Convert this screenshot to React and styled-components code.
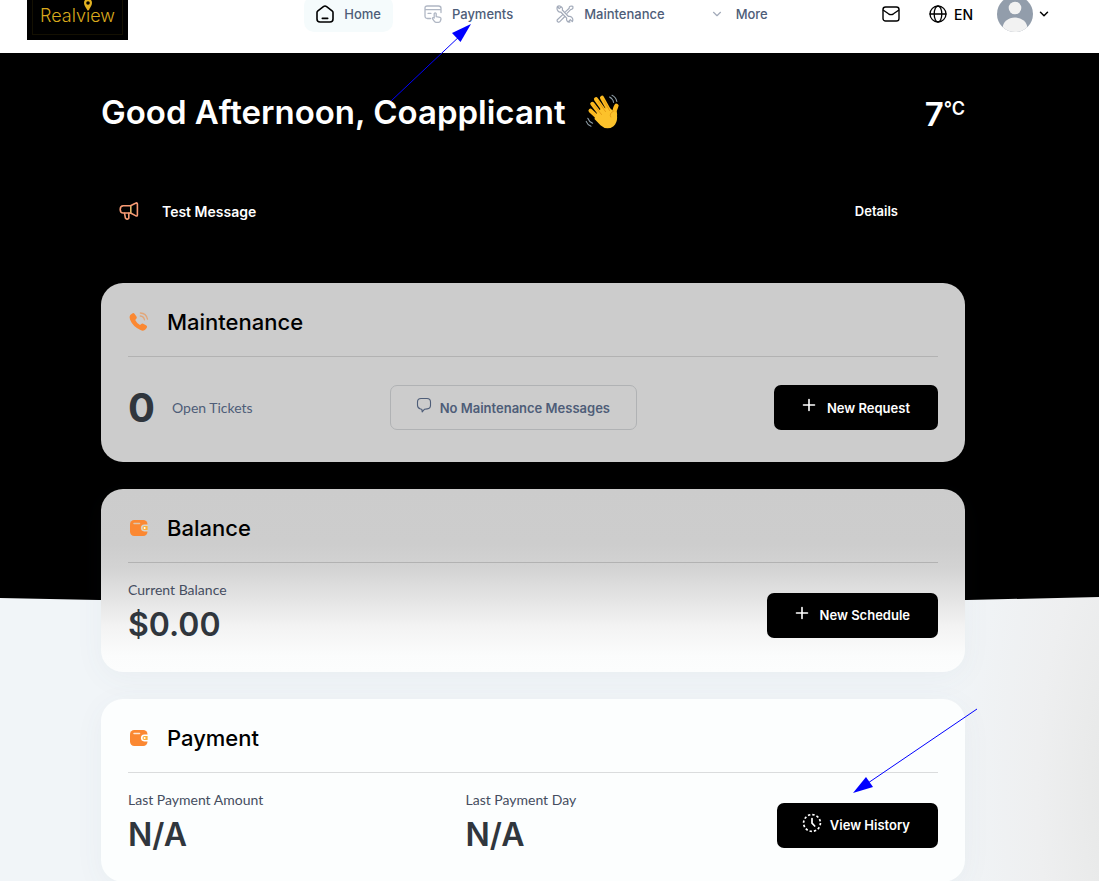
import React from "react";
import styled, { createGlobalStyle } from "styled-components";

const GlobalStyle = createGlobalStyle`
  * { box-sizing: border-box; }
  body {
    margin: 0;
    font-family: Inter, "Liberation Sans", sans-serif;
    color: #000;
    background: #f1f5f8;
  }
  svg { display: block; flex: none; }
  a { color: inherit; text-decoration: none; }
  button { font: inherit; cursor: pointer; }
  h1, h2, p, dl, dt, dd { margin: 0; }
`;

const Page = styled.div`
  position: relative;
  overflow: hidden;
`;

const Header = styled.header`
  display: flex;
  align-items: center;
  justify-content: space-between;
  height: 53px;
  padding: 0 50px 25px 27px;
  background: #fff;
`;

const Logo = styled.a`
  display: flex;
  width: 101px;
  height: 52px;
  padding: 5px;
  background: #000;
`;

const LogoFrame = styled.span`
  position: relative;
  flex: 1;
  display: flex;
  align-items: center;
  justify-content: center;
  padding-top: 3px;
  border: 1px solid #141002;
  color: #d9a91c;
  font-size: 18px;
  font-weight: 300;
`;

const LogoPin = styled.svg`
  position: absolute;
  top: 5px;
  left: 51px;
`;

const Nav = styled.nav`
  display: flex;
  gap: 19px;
  margin-left: 74px;
`;

const NavItem = styled.a`
  display: flex;
  align-items: center;
  gap: 10px;
  height: 36px;
  padding: 0 12px;
  border-radius: 10px;
  background: ${(p) => (p.$active ? "#f5fbfc" : "transparent")};
  color: #4e5d78;
  font-size: 13px;
  font-weight: 500;
`;

const Tools = styled.div`
  display: flex;
  align-items: center;
`;

const ToolButton = styled.button`
  display: flex;
  align-items: center;
  gap: ${(p) => p.$gap || 7}px;
  margin: 0 0 0 ${(p) => p.$space || 0}px;
  padding: 0;
  border: 0;
  background: none;
  color: #000;
  font-size: 14px;
  font-weight: 500;
`;

const Main = styled.main`
  position: relative;
  z-index: 0;
  padding: 37px 134px 27px 101px;
  background: radial-gradient(ellipse 190px 520px at 103% 86%, #e5e6e5, #eeeff0 50%, #f1f5f8);

  &::before {
    content: "";
    position: absolute;
    z-index: -1;
    inset: 0 0 auto;
    height: 549px;
    background: #000;
    clip-path: polygon(
      0 0,
      100% 0,
      100% calc(100% - 5px),
      88% calc(100% - 2px),
      50% 100%,
      9% calc(100% - 2px),
      0 calc(100% - 4px)
    );
  }
`;

const Greeting = styled.div`
  display: flex;
  align-items: center;
  justify-content: space-between;
  height: 44px;
  color: #fff;
`;

const Title = styled.h1`
  display: flex;
  align-items: center;
  gap: 19px;
  font-size: 33px;
  line-height: 44px;
  font-weight: 600;
`;

const Temperature = styled.p`
  display: flex;
  align-items: flex-start;
  padding-top: 4px;
  font-size: 33px;
  line-height: 44px;
  font-weight: 600;
`;

const Unit = styled.span`
  font-size: 18px;
  line-height: 34px;
`;

const Notice = styled.section`
  display: flex;
  align-items: center;
  height: 40px;
  margin: 57px 0 52px;
  padding: 0 67px 0 18px;
  color: #fff;
  font-size: 13px;
  font-weight: 600;
`;

const NoticeText = styled.p`
  flex: 1;
  padding-left: 23px;
  font-size: 14px;
`;

const Cards = styled.div`
  display: grid;
  gap: 27px;
`;

const surfaces = {
  dim: "#ccc",
  fade: "linear-gradient(#ccc 0, #cdcdcd 30%, #d3d3d3 43%, #e4e4e4 60%, #f3f3f3 75%, #fbfcfc 91%, #fcfdfd)",
  light: "#fcfefe",
};

const Card = styled.section`
  padding: 0 27px;
  border-radius: 22px;
  background: ${(p) => surfaces[p.$surface]};
  box-shadow: ${(p) => (p.$surface === "dim" ? "none" : "0 6px 30px rgba(70, 90, 120, 0.05)")};
`;

const CardHead = styled.div`
  display: flex;
  align-items: center;
  gap: 17px;
  height: 74px;
  padding-top: 5px;
  border-bottom: 1px solid ${(p) => (p.$light ? "#dadcdd" : "#b2b2b2")};
`;

const CardTitle = styled.h2`
  font-size: 22px;
  font-weight: 500;
`;

const TicketRow = styled.div`
  display: flex;
  align-items: center;
  justify-content: space-between;
  padding: 28px 0 32px;
`;

const Tickets = styled.p`
  display: flex;
  align-items: center;
  gap: 17px;
  color: #4e5d78;
  font-family: Lato, sans-serif;
  font-size: 14px;
`;

const Count = styled.strong`
  color: #30363d;
  font-family: Inter, sans-serif;
  font-size: 40px;
  line-height: 45px;
  font-weight: 700;
`;

const FigureRow = styled.div`
  display: grid;
  grid-template-columns: ${(p) => p.$columns};
  align-items: center;
  padding: 17px 0 22px;

  > button { justify-self: end; }
`;

const Figure = styled.dl`
  dt {
    color: #454d60;
    font-family: Lato, sans-serif;
    font-size: 14px;
    line-height: 20px;
  }
  dd {
    color: #30363d;
    font-size: 32px;
    line-height: 50px;
    font-weight: 600;
  }
`;

const Button = styled.button`
  display: flex;
  align-items: center;
  gap: 8px;
  height: 45px;
  padding: 0 ${(p) => (p.$outline ? 26 : 28)}px 0 25px;
  border: ${(p) => (p.$outline ? "1px solid #b0b2b4" : "0")};
  border-radius: 7px;
  background: ${(p) => (p.$outline ? "transparent" : "#000")};
  color: ${(p) => (p.$outline ? "#4e5d78" : "#fff")};
  font-size: 13px;
  font-weight: 600;
  white-space: nowrap;

  svg { margin-bottom: 5px; }
`;

const Pointer = styled.svg`
  position: absolute;
  z-index: 2;
  left: ${(p) => p.$left}px;
  top: ${(p) => p.$top}px;
  pointer-events: none;
`;

const line = { fill: "none", stroke: "currentColor", strokeLinecap: "round", strokeLinejoin: "round" };

const HomeIcon = () => (
  <svg width="18" height="18" viewBox="0 0 18 18" {...line} stroke="#000" strokeWidth="1.6">
    <path d="M1 7.6Q1 6.5 1.9 5.8L7.4 1.6Q9 .4 10.6 1.6L16.1 5.8Q17 6.5 17 7.6V14Q17 17 14 17H4Q1 17 1 14ZM6.3 13.4h5.4" />
  </svg>
);
const PaymentsIcon = () => (
  <svg width="18" height="18" viewBox="0 0 18 18" {...line} stroke="#b0b7c4" strokeWidth="1.3">
    <path d="M6.5 13.5H3.5Q1 13.5 1 11V3Q1 1 3.2 1H14.5Q17 1 17 3.2V7.5M1 4.7h16M4 8.3h3" />
    <path d="M10.2 13V8.7Q11.2 7.2 12.2 8.7V11.6L16 12.3Q17.2 12.7 17 14L16.4 16Q16 17.3 14.5 17.3H12.2Q11.2 17.3 10.4 16.3L8.4 13.7Q8.6 12 10.2 13" />
  </svg>
);
const ToolsIcon = () => (
  <svg width="18" height="18" viewBox="0 0 18 18" {...line} stroke="#a3abba" strokeWidth="1.2">
    <path d="M1.4 1.5Q3.5-.2 6 2.5Q6.8 3.5 6.3 5L12.5 11.5Q14.5 11 15.8 12.3Q17.5 14 16.4 16.6L14.3 14.7 12.7 16.4 14 17Q12 17.3 11 15.8Q10.3 14.7 10.7 13.2L4.7 7Q3.2 7.4 2 6Q.4 4.3 1.4 1.5L3.2 3.6 4.8 2.2" />
    <path d="M9.6 6.6L13.2 3.2Q13 1.2 15.3 1L16.8 1.3Q17.5 4.4 14.6 4.7L11.2 8.2M6.8 9.6L1.3 14.8Q.7 16.3 2 17Q3 17.4 3.8 16.6L8.8 11.5" />
  </svg>
);
const Chevron = ({ size, stroke = "#000", weight = 1.5 }) => (
  <svg width={size} height="8" viewBox={`${-(size - 10) / 2} 0 ${size} 8`} {...line} stroke={stroke} strokeWidth={weight}>
    <path d="M1.5 2.3L5 5.7 8.5 2.3" />
  </svg>
);
const MailIcon = () => (
  <svg width="18" height="18" viewBox="0 0 18 18" {...line} strokeWidth="1.4">
    <rect x="1" y="2" width="16" height="14" rx="2.6" />
    <path d="M1.4 5.2L6.5 8.8Q9 10.4 11.5 8.8L16.6 5.2" />
  </svg>
);
const GlobeIcon = () => (
  <svg width="18" height="18" viewBox="0 0 18 18" {...line} strokeWidth="1.3">
    <circle cx="9" cy="9" r="8" />
    <ellipse cx="9" cy="9" rx="3.8" ry="8" />
    <path d="M1 9h16" />
  </svg>
);
const Avatar = () => (
  <svg width="36" height="36" viewBox="0 0 36 36">
    <defs><clipPath id="face"><circle cx="18" cy="18" r="18" /></clipPath></defs>
    <g clipPath="url(#face)">
      <rect width="36" height="36" fill="#929dab" />
      <circle cx="18" cy="12" r="6.3" fill="#f2f2f2" />
      <ellipse cx="18" cy="32" rx="12.3" ry="10.5" fill="#f2f2f2" />
    </g>
  </svg>
);
const Wave = () => (
  <svg width="36" height="36" viewBox="0 0 36 36" role="img" aria-label="Waving hand">
    <g fill="none" stroke="#fbb91f" strokeLinecap="round">
      <path d="M7.3 9.8L17.5 23M11 5.2L20.8 19M17 3.7L24.6 17.5" strokeWidth="4.1" />
      <path d="M5.5 16.7L16 26.5" strokeWidth="4" />
      <path d="M31.4 11.8Q28.8 16 30 21" strokeWidth="4.4" />
    </g>
    <path d="M10.5 21L16 14.5 24.5 14 28.5 17 31.6 19Q33.5 28 28.5 32.2Q22 37 15.5 31.2L9.5 25Z" fill="#fcc22b" />
    <path d="M9.4 11.5L16.5 20.5M13.3 7.4L20.5 17.6M18.8 6.1L24.6 16.6M25.8 23Q23.6 19.6 28.5 17.1" fill="none" stroke="#df9210" strokeWidth=".8" strokeLinecap="round" />
    <path d="M24.6 3.1Q28 5 28.6 8.5M27 1.2Q31 3 31.8 7.5M2.8 24.2Q4 27.6 7.6 29.3M1.2 27.4Q2.5 31 6 32.2" fill="none" stroke="#8b9aa3" strokeWidth="1.1" strokeLinecap="round" />
  </svg>
);
const Megaphone = () => (
  <svg width="20" height="20" viewBox="0 0 20 20" {...line} stroke="#f79a74" strokeWidth="1.6">
    <path d="M11.5 4.8H4.3Q1.2 5 1.2 8.4T4.3 12H11.5" />
    <path d="M11.5 4.8L16.5 2.3Q18.4 1.2 18.4 3V14Q18.4 15.7 16.5 14.6L11.5 12M5.5 12.2L6.4 17Q7.8 19.2 9.8 17.2V12.4" />
    <path d="M11.8 5.5V11.6" stroke="#e0b568" />
  </svg>
);
const PhoneIcon = () => (
  <svg width="22" height="22" viewBox="0 0 22 22">
    <path d="M2.2 3.9L4.3 2.4Q5.5 1.7 6.5 2.7L8.6 5.7Q9.2 6.8 8.3 7.7L7.2 8.9Q8.6 12 12 13.9L13.3 12.9Q14.2 12.2 15.2 12.7L18.4 14.6Q19.5 15.5 18.8 16.8L17.4 18.6Q15.6 20.4 12.5 19.1Q4.7 15.4 2 8.5Q1 5.5 2.2 3.9Z" fill="#fb8832" />
    <path d="M12.4 2Q18.2 2.2 19.5 8.2M12.3 5Q15.8 5.4 16.5 8.8" fill="none" stroke="#e2a77a" strokeWidth="1.3" strokeLinecap="round" />
  </svg>
);
const WalletIcon = ({ hole }) => (
  <svg width="22" height="22" viewBox="0 0 22 22">
    <rect x="2" y="3" width="17.5" height="16" rx="4.2" fill="#fb8832" />
    <path d="M6 6.4h5.5" stroke={hole} strokeWidth="1.5" strokeLinecap="round" opacity=".8" />
    <path d="M20 7.6H16.2Q12.9 7.9 12.9 11T16.2 14.4H20Z" fill={hole} />
    <path d="M19.6 9H16.3Q14.5 9.2 14.5 11T16.3 13H19.6Z" fill="#fcaf38" />
    <circle cx="16.6" cy="11" r="1" fill="#fff" />
  </svg>
);
const PlusIcon = () => (
  <svg width="20" height="20" viewBox="0 0 20 20" {...line} strokeWidth="1.6"><path d="M4.5 10h11M10 4.5v11" /></svg>
);
const ChatIcon = () => (
  <svg width="16" height="16" viewBox="0 0 16 16" {...line} strokeWidth="1.1">
    <path d="M5.8 12.2L4.6 12Q1.5 11.4 1.5 8.3V5Q1.5 1.5 5 1.5H11Q14.5 1.5 14.5 5V8.3Q14.5 11.6 11.2 11.9L8.6 12.2 6.2 14.8Z" />
  </svg>
);
const HistoryIcon = () => (
  <svg width="20" height="20" viewBox="0 0 20 20" {...line} strokeWidth="1.7">
    <circle cx="10" cy="10" r="8.4" strokeDasharray="2.4 2" strokeLinecap="butt" />
    <path d="M10 5.5V10.2L12.7 13" />
  </svg>
);

export default function App() {
  return (
    <>
      <GlobalStyle />
      <Page>
        <Header>
          <Logo href="#home">
            <LogoFrame>
              Realview
              <LogoPin width="8" height="12" viewBox="0 0 8 12">
                <path d="M4 12Q0 6.5 0 4A4 4 0 0 1 8 4Q8 6.5 4 12Z" fill="#e2b222" />
                <circle cx="4" cy="4" r="1.8" fill="#000" />
              </LogoPin>
            </LogoFrame>
          </Logo>
          <Nav>
            <NavItem href="#home" $active><HomeIcon />Home</NavItem>
            <NavItem href="#payments"><PaymentsIcon />Payments</NavItem>
            <NavItem href="#maintenance"><ToolsIcon />Maintenance</NavItem>
            <NavItem href="#more"><Chevron size={18} stroke="#a3abba" weight={1.2} />More</NavItem>
          </Nav>
          <Tools>
            <ToolButton aria-label="Messages"><MailIcon /></ToolButton>
            <ToolButton $space={29}><GlobeIcon />EN</ToolButton>
            <ToolButton $space={24} $gap={6} aria-label="Account"><Avatar /><Chevron size={10} /></ToolButton>
          </Tools>
        </Header>

        <Main>
          <Greeting>
            <Title>Good Afternoon, Coapplicant <Wave /></Title>
            <Temperature>7<Unit>°C</Unit></Temperature>
          </Greeting>

          <Notice>
            <Megaphone />
            <NoticeText>Test Message</NoticeText>
            <a href="#details">Details</a>
          </Notice>

          <Cards>
            <Card $surface="dim">
              <CardHead><PhoneIcon /><CardTitle>Maintenance</CardTitle></CardHead>
              <TicketRow>
                <Tickets><Count>0</Count>Open Tickets</Tickets>
                <Button $outline><ChatIcon />No Maintenance Messages</Button>
                <Button><PlusIcon />New Request</Button>
              </TicketRow>
            </Card>

            <Card $surface="fade">
              <CardHead><WalletIcon hole="#d8d4ca" /><CardTitle>Balance</CardTitle></CardHead>
              <FigureRow $columns="1fr auto">
                <Figure><dt>Current Balance</dt><dd>$0.00</dd></Figure>
                <Button><PlusIcon />New Schedule</Button>
              </FigureRow>
            </Card>

            <Card $surface="light">
              <CardHead $light><WalletIcon hole="#fff" /><CardTitle>Payment</CardTitle></CardHead>
              <FigureRow $columns="5fr 4fr 3fr">
                <Figure><dt>Last Payment Amount</dt><dd>N/A</dd></Figure>
                <Figure><dt>Last Payment Day</dt><dd>N/A</dd></Figure>
                <Button><HistoryIcon />View History</Button>
              </FigureRow>
            </Card>
          </Cards>
        </Main>

        <Pointer $left={388} $top={22} width="86" height="82" viewBox="388 22 86 82" aria-hidden="true">
          <path d="M391 101L462 34" stroke="#00f" />
          <path d="M471 24L452 33 460.500 42Z" fill="#00f" />
        </Pointer>
        <Pointer $left={850} $top={706} width="130" height="90" viewBox="850 706 130 90" aria-hidden="true">
          <path d="M977 709L868 783" stroke="#00f" />
          <path d="M853 793L866 777 873 787Z" fill="#00f" />
        </Pointer>
      </Page>
    </>
  );
}
